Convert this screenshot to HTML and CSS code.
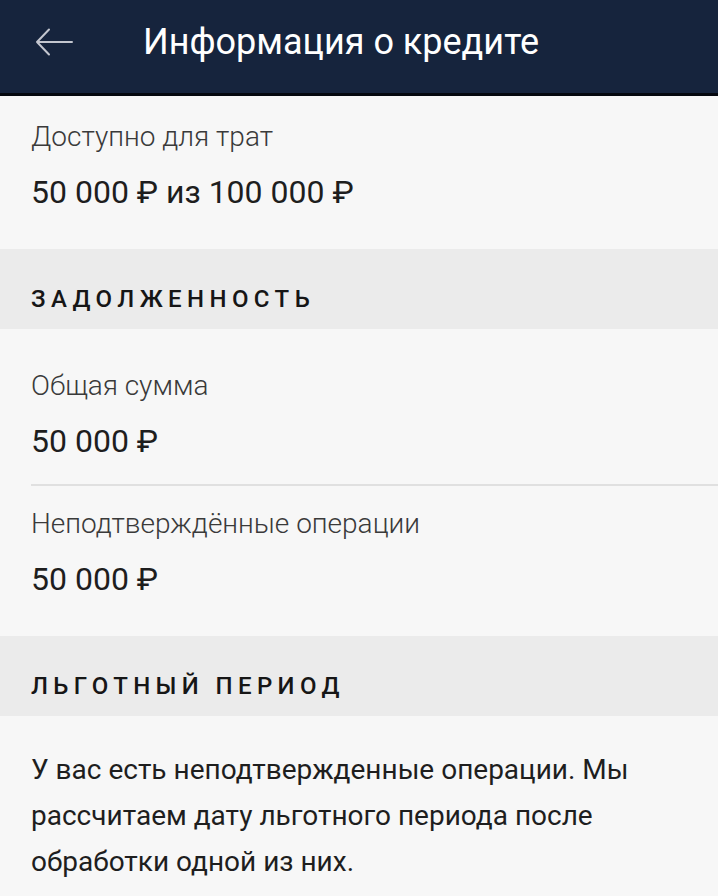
FILE: index.html
```html
<!DOCTYPE html>
<html lang="ru">
  <head>
    <meta charset="UTF-8" />
    <meta name="viewport" content="width=device-width, initial-scale=1.0" />
    <title>Информация о кредите</title>
    <link rel="stylesheet" href="styles.css">
  </head>
  <body>
    <header class="top-bar">
      <button class="back-btn" aria-label="Назад">
        <svg width="40" height="32" viewBox="0 0 40 32">
          <path d="M38 16 H3 M15 3.5 L3 16 L15 28.5" fill="none" stroke="#c3c6cf" stroke-width="2" stroke-linecap="round" stroke-linejoin="round"/>
        </svg>
      </button>
      <h1 class="top-bar-title">Информация о кредите</h1>
    </header>

    <section class="info-block info-block-first">
      <div class="info-row">
        <div class="info-label">Доступно для трат</div>
        <div class="info-value">50 000 ₽ из 100 000 ₽</div>
      </div>
    </section>

    <h2 class="section-title">Задолженность</h2>

    <section class="info-block">
      <div class="info-row">
        <div class="info-label">Общая сумма</div>
        <div class="info-value">50 000 ₽</div>
      </div>
      <div class="info-row">
        <div class="info-label">Неподтверждённые операции</div>
        <div class="info-value">50 000 ₽</div>
      </div>
    </section>

    <h2 class="section-title">Льготный период</h2>

    <p class="note">
      У вас есть неподтвержденные операции. Мы рассчитаем дату льготного периода после обработки одной из них.
    </p>
  </body>
</html>
```

FILE: styles.css
```css
body {
  margin: 0;
  background-color: #f7f7f7;
  font-family: Roboto, "Noto Sans", sans-serif;
  color: #1c1c1c;
}

.top-bar {
  display: flex;
  align-items: center;
  height: 84px;
  padding-bottom: 9px;
  background-color: #16243d;
  border-bottom: 3px solid #05080f;
}
.back-btn {
  display: flex;
  align-items: center;
  background: none;
  border: none;
  padding: 0;
  margin-left: 34px;
  cursor: pointer;
}
.top-bar-title {
  margin: 0 0 0 69px;
  color: #ffffff;
  font-size: 36px;
  font-weight: 400;
  line-height: 42px;
}

.info-block {
  padding: 19px 0 14px 31px;
}
.info-block-first {
  padding-top: 3px;
}
.info-row {
  padding: 21px 0 26px;
}
.info-row + .info-row {
  border-top: 2px solid #e0e0e0;
}
.info-label {
  font-size: 28px;
  font-weight: 300;
  color: #3a3a3a;
  line-height: 34px;
}
.info-value {
  margin-top: 21px;
  font-size: 32px;
  line-height: 34px;
  color: #1e1e1e;
}

.section-title {
  margin: 0;
  height: 80px;
  display: flex;
  align-items: center;
  padding: 20px 31px 0;
  box-sizing: border-box;
  background-color: #ebebeb;
  font-size: 24px;
  font-weight: 500;
  text-transform: uppercase;
  letter-spacing: 5.4px;
  color: #161616;
}

.note {
  margin: 0;
  padding: 31px 31px 0;
  font-size: 28px;
  line-height: 46px;
  color: #1e1e1e;
}
```
